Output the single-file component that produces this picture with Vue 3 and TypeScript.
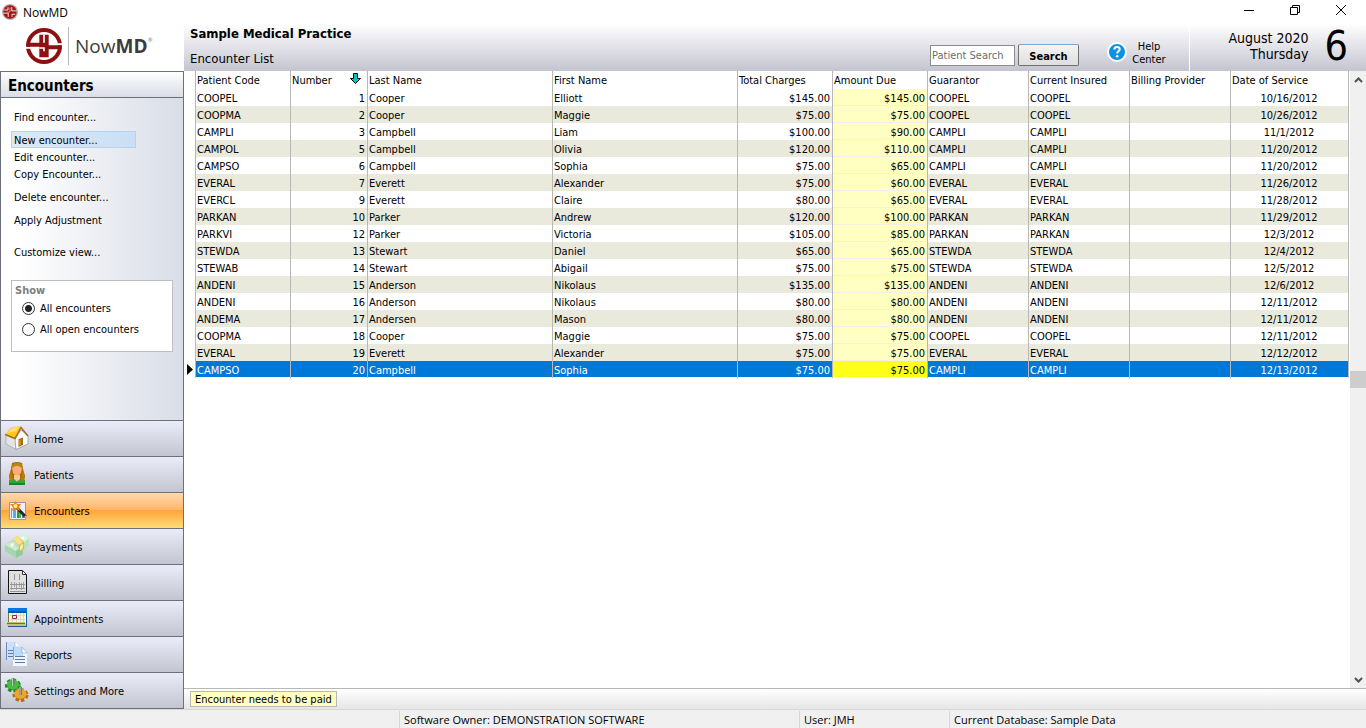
<script setup lang="ts">
import { ref } from 'vue'

interface Encounter {
  code: string
  num: number
  last: string
  first: string
  total: string
  due: string
  guarantor: string
  insured: string
  date: string
}

function enc(code: string, num: number, last: string, first: string, total: string, due: string, guarantor: string, insured: string, date: string): Encounter {
  return { code, num, last, first, total, due, guarantor, insured, date }
}

const rows: Encounter[] = [
  enc('COOPEL', 1, 'Cooper', 'Elliott', '$145.00', '$145.00', 'COOPEL', 'COOPEL', '10/16/2012'),
  enc('COOPMA', 2, 'Cooper', 'Maggie', '$75.00', '$75.00', 'COOPEL', 'COOPEL', '10/26/2012'),
  enc('CAMPLI', 3, 'Campbell', 'Liam', '$100.00', '$90.00', 'CAMPLI', 'CAMPLI', '11/1/2012'),
  enc('CAMPOL', 5, 'Campbell', 'Olivia', '$120.00', '$110.00', 'CAMPLI', 'CAMPLI', '11/20/2012'),
  enc('CAMPSO', 6, 'Campbell', 'Sophia', '$75.00', '$65.00', 'CAMPLI', 'CAMPLI', '11/20/2012'),
  enc('EVERAL', 7, 'Everett', 'Alexander', '$75.00', '$60.00', 'EVERAL', 'EVERAL', '11/26/2012'),
  enc('EVERCL', 9, 'Everett', 'Claire', '$80.00', '$65.00', 'EVERAL', 'EVERAL', '11/28/2012'),
  enc('PARKAN', 10, 'Parker', 'Andrew', '$120.00', '$100.00', 'PARKAN', 'PARKAN', '11/29/2012'),
  enc('PARKVI', 12, 'Parker', 'Victoria', '$105.00', '$85.00', 'PARKAN', 'PARKAN', '12/3/2012'),
  enc('STEWDA', 13, 'Stewart', 'Daniel', '$65.00', '$65.00', 'STEWDA', 'STEWDA', '12/4/2012'),
  enc('STEWAB', 14, 'Stewart', 'Abigail', '$75.00', '$75.00', 'STEWDA', 'STEWDA', '12/5/2012'),
  enc('ANDENI', 15, 'Anderson', 'Nikolaus', '$135.00', '$135.00', 'ANDENI', 'ANDENI', '12/6/2012'),
  enc('ANDENI', 16, 'Anderson', 'Nikolaus', '$80.00', '$80.00', 'ANDENI', 'ANDENI', '12/11/2012'),
  enc('ANDEMA', 17, 'Andersen', 'Mason', '$80.00', '$80.00', 'ANDENI', 'ANDENI', '12/11/2012'),
  enc('COOPMA', 18, 'Cooper', 'Maggie', '$75.00', '$75.00', 'COOPEL', 'COOPEL', '12/11/2012'),
  enc('EVERAL', 19, 'Everett', 'Alexander', '$75.00', '$75.00', 'EVERAL', 'EVERAL', '12/12/2012'),
  enc('CAMPSO', 20, 'Campbell', 'Sophia', '$75.00', '$75.00', 'CAMPLI', 'CAMPLI', '12/13/2012'),
]

const nav = ['Home', 'Patients', 'Encounters', 'Payments', 'Billing', 'Appointments', 'Reports', 'Settings and More']
const active = ref('Encounters')
const selected = ref(20)
const show = ref('all')
const search = ref('')
</script>

<template>
  <div class="window">
    <header class="titlebar">
      <svg class="title-icon" viewBox="0 0 36 36" aria-hidden="true">
        <circle cx="18" cy="18" r="18" fill="#b4b4b4" />
        <circle cx="18" cy="18" r="15" fill="#a01414" />
        <path d="M5 13.500H13.500V7M22 7V15.500H33M3 20.500H14V29M22.500 29V23H30" fill="none" stroke="#fff" stroke-width="2" />
        <path d="M18 8V18H12" fill="none" stroke="#e8c8c8" stroke-width="1.500" />
      </svg>
      <span class="title-text">NowMD</span>
      <div class="controls">
        <button type="button" aria-label="Minimize"><svg viewBox="0 0 12 12"><path d="M1 6.500H11" /></svg></button>
        <button type="button" aria-label="Restore"><svg viewBox="0 0 12 12"><path d="M1.500 3.500H8.500V10.500H1.500ZM3.500 3.500V1.500H10.500V8.500H8.500" /></svg></button>
        <button type="button" aria-label="Close"><svg viewBox="0 0 12 12"><path d="M1 1L11 11M11 1L1 11" /></svg></button>
      </div>
    </header>

    <div class="body">
      <aside class="sidebar">
        <div class="logo">
          <svg class="logo-mark" viewBox="0 0 108 108" aria-hidden="true">
            <circle cx="54" cy="54" r="48" fill="none" stroke="#8f1010" stroke-width="12" />
            <path d="M0 56H30V62H0ZM78 46H108V52H78Z" fill="#fff" />
            <path d="M2 44H40V20H68V52H106V64H68V88H40V56H2Z" fill="#8f1010" />
            <path d="M54 20V44M40 60H54V70" fill="none" stroke="#fff" stroke-width="5" />
          </svg>
          <span class="logo-text">Now<b>MD</b></span><span class="reg">®</span>
        </div>
        <h2 class="side-title">Encounters</h2>
        <div class="side-panel">
          <nav class="actions">
            <a href="#">Find encounter...</a>
            <a href="#" class="hot spaced">New encounter...</a>
            <a href="#">Edit encounter...</a>
            <a href="#">Copy Encounter...</a>
            <a href="#" class="spaced">Delete encounter...</a>
            <a href="#" class="spaced">Apply Adjustment</a>
            <a href="#" class="far">Customize view...</a>
          </nav>
          <fieldset class="show">
            <legend>Show</legend>
            <label><input v-model="show" type="radio" name="show" value="all" />All encounters</label>
            <label><input v-model="show" type="radio" name="show" value="open" />All open encounters</label>
          </fieldset>
        </div>
        <nav class="modules">
          <button v-for="item in nav" :key="item" type="button" :class="{ active: active === item }" @click="active = item">
            <svg viewBox="0 0 24 24" aria-hidden="true">
              <template v-if="item === 'Home'">
                <path d="M1 9V18L11 23.500V13Z" fill="#e4e4e6" stroke="#a2a2a2" stroke-width=".7" />
                <path d="M10 13L16 4L23 10V18L11 23.500Z" fill="#fff" stroke="#8d8d8d" stroke-width=".7" />
                <path d="M3 3H6V7H3Z" fill="#f0d98a" />
                <path d="M0 8.500L7 1L16 .500L10 12Z" fill="#ffc81f" />
                <path d="M2 7L8 1.500L14 1.500L11 5Z" fill="#ffe36c" />
                <path d="M0 8.500L10 12.500L16 1.500L23 10" fill="none" stroke="#9b7018" stroke-width="1.500" />
                <path d="M13.500 13L18 11.500V19L13.500 21Z" fill="#a86d13" />
                <path d="M14 14L16 13V19L14 20Z" fill="#c48a2a" />
                <path d="M17 4H19V5H17Z" fill="#e340b4" />
              </template>
              <template v-else-if="item === 'Patients'">
                <path d="M7 1Q12 -1 17 1L18 7L20 14L19 19H5L4 14L6 7Z" fill="#a96c09" />
                <path d="M4 18L8 16L12 19L16 16L20 18V22H4Z" fill="#2aa83b" />
                <path d="M4 21H20V23H4Z" fill="#16852b" />
                <path d="M9 13H15V17L12 19.500L9 17Z" fill="#ffc692" />
                <path d="M7 6Q12 1 17 6L16 11Q12 16 8 11Z" fill="#f9ae76" />
                <path d="M6 6Q7 1 12 1Q17 1 18 6L14 4H10Z" fill="#ba860c" />
                <path d="M6 8L8 17L6 20L4 15ZM18 8L16 17L18 20L20 15Z" fill="#b9790d" />
              </template>
              <template v-else-if="item === 'Encounters'">
                <path d="M4.500 4.500H20.500V21.500H4.500Z" fill="#edf1f8" stroke="#9298a3" />
                <path d="M6 10H7V20H6Z" fill="#8d93a0" />
                <path d="M8 11H11V20H8Z" fill="#55aef0" />
                <path d="M12 13H14V20H12Z" fill="#23a238" />
                <path d="M14 14H16V20H14Z" fill="#3bbd4d" />
                <path d="M17 17H19V20H17Z" fill="#9255bb" />
                <path d="M12 10L21 19" stroke="#262626" stroke-width="3" />
                <path d="M20 18L22 20" stroke="#bcbcbc" stroke-width="2" />
                <path d="M10.500 3L12 6L16 6L14 9L15 13L11 11L7 13L8 9L5 6L9 6Z" fill="#f57c18" />
                <circle cx="10.500" cy="8" r="2" fill="#fff478" />
              </template>
              <template v-else-if="item === 'Payments'">
                <path d="M0 11L8 6L18 13V20L11 24L0 17Z" fill="#a6d6ac" />
                <path d="M0 11L8 7L16 12L11 17Z" fill="#cdeccd" />
                <path d="M11 17L18 12V20L11 24Z" fill="#94c99c" />
                <path d="M10 4L18 0L24 4V12L18 17L10 12Z" fill="#b8e2bb" />
                <path d="M10 4L18 0L24 4L18 9Z" fill="#dbf2da" />
                <path d="M8 5L12 2L19 8V15L14 19V11Z" fill="#e6b143" />
                <path d="M8 5L12 2L18 8L14 11Z" fill="#ffe084" />
                <path d="M15 12L18 9V14L15 17Z" fill="#fff0a0" />
                <circle cx="7" cy="11" r="1.500" fill="#f5fff4" />
                <circle cx="18" cy="4" r="1.500" fill="#f5fff4" />
              </template>
              <template v-else-if="item === 'Billing'">
                <path d="M3.500 .500H17.500L21.500 4.500V23.500H3.500Z" fill="#e0e0e0" stroke="#151515" />
                <path d="M17.500 1V4.500H21" fill="#fff" stroke="#333" />
                <path d="M9.500 4V10M14.500 4V10" stroke="#959595" />
                <path d="M6.500 12V20M9.500 12V17M11.500 13V20M14.500 12V17M16.500 13V20M18.500 12V19" stroke="#a4a4a4" />
                <path d="M5 14.500H20M5 18.500H20M5 21.500H20" stroke="#959595" />
              </template>
              <template v-else-if="item === 'Appointments'">
                <path d="M3 3H22V20H3Z" fill="#f8f8df" />
                <path d="M3 2H22V5H3Z" fill="#0b77d5" />
                <path d="M3 5H22V7H3Z" fill="#0759aa" />
                <path d="M21.500 5V21" stroke="#0c65ba" />
                <path d="M5 9.500H20M5 13.500H20M7.500 7V16M11.500 7V16M15.500 7V16M18.500 7V16" stroke="#d9d9b4" />
                <path d="M7.500 9.500H11.500V12.500H7.500Z" fill="#fff" stroke="#a31c60" />
                <path d="M3.500 7V17" stroke="#777732" />
                <path d="M2 16H20L21 20H2Z" fill="#c6c36a" />
                <path d="M2 17.500H20" stroke="#74732a" />
                <path d="M3 20.500H22" stroke="#28568b" />
              </template>
              <template v-else-if="item === 'Reports'">
                <path d="M1 0H10L15 5V18H1Z" fill="#c9e3fc" />
                <path d="M10 0V5H15" fill="#fff" stroke="#9bbbdd" stroke-width=".7" />
                <path d="M1.500 0V18" stroke="#7689b8" />
                <path d="M3 8.500H8M3 11.500H8M3 14.500H8" stroke="#6578aa" />
                <path d="M8 5H17L22 11V24H8Z" fill="#f0f7ff" />
                <path d="M8 5H17L18 11V14H8Z" fill="#b9dcff" />
                <path d="M17 5V11H22Z" fill="#fff" stroke="#8baad1" stroke-width=".7" />
                <path d="M8.500 5V18" stroke="#8ba6cf" />
                <path d="M10 14.500H20M10 17.500H20M10 20.500H20" stroke="#6578aa" />
              </template>
              <template v-else>
                <ellipse cx="8" cy="7.500" rx="6" ry="5" fill="#35aa31" stroke="#247f26" stroke-width="4" stroke-dasharray="3 2" />
                <ellipse cx="8" cy="6.500" rx="6" ry="5" fill="#45c03a" />
                <ellipse cx="15.500" cy="17" rx="6" ry="5" fill="#d98a16" stroke="#b46c0d" stroke-width="4" stroke-dasharray="3 2" />
                <ellipse cx="15.500" cy="16" rx="6" ry="5" fill="#eba62e" />
                <path d="M8 0V8M15.500 9V17" stroke="#737a80" stroke-width="3" />
                <path d="M7.500 0V8M15 9V17" stroke="#bfc4c8" />
              </template>
            </svg>
            <span>{{ item }}</span>
          </button>
        </nav>
      </aside>

      <main class="main">
        <header class="banner">
          <div class="headings">
            <h1>Sample Medical Practice</h1>
            <p>Encounter List</p>
          </div>
          <form class="search" @submit.prevent>
            <input v-model="search" type="text" placeholder="Patient Search" aria-label="Patient Search" />
            <button type="submit">Search</button>
          </form>
          <a href="#" class="help">
            <svg viewBox="0 0 20 20" aria-hidden="true">
              <circle cx="10" cy="10" r="9" fill="#0b92e2" stroke="#fff" stroke-width="2" />
              <path d="M7.300 7.500Q7.500 5 10 5Q12.700 5 12.700 7.300Q12.700 8.700 11 9.600Q10.200 10.200 10.200 11.500" fill="none" stroke="#fff" stroke-width="2" />
              <circle cx="10.200" cy="14.200" r="1.300" fill="#fff" />
            </svg>
            <span>Help<br />Center</span>
          </a>
          <div class="date">
            <span>August 2020<br />Thursday</span>
            <strong>6</strong>
          </div>
        </header>

        <div class="content">
          <div class="grid">
            <table>
              <colgroup>
                <col class="c-mark" /><col class="c-money" /><col class="c-num" /><col /><col />
                <col class="c-money" /><col class="c-money" /><col class="c-code" /><col class="c-code" /><col class="c-code" /><col class="c-date" />
              </colgroup>
              <thead>
                <tr>
                  <th aria-label="Current row"></th>
                  <th>Patient Code</th>
                  <th>
                    <div class="sorted">Number
                      <svg viewBox="0 0 11 11" aria-hidden="true"><path d="M3.500 0.500H7.500V5.500H10.500L5.500 10.500L0.500 5.500H3.500Z" fill="#00c4c4" stroke="#000" /></svg>
                    </div>
                  </th>
                  <th>Last Name</th>
                  <th>First Name</th>
                  <th>Total Charges</th>
                  <th>Amount Due</th>
                  <th>Guarantor</th>
                  <th>Current Insured</th>
                  <th>Billing Provider</th>
                  <th>Date of Service</th>
                </tr>
              </thead>
              <tbody>
                <tr v-for="r in rows" :key="r.num" :class="{ selected: selected === r.num }" @click="selected = r.num">
                  <td class="mark"><svg v-if="selected === r.num" viewBox="0 0 6 11" aria-hidden="true"><path d="M0 0L6 5.500L0 11Z" /></svg></td>
                  <td>{{ r.code }}</td>
                  <td class="right">{{ r.num }}</td>
                  <td>{{ r.last }}</td>
                  <td>{{ r.first }}</td>
                  <td class="right">{{ r.total }}</td>
                  <td class="right due">{{ r.due }}</td>
                  <td>{{ r.guarantor }}</td>
                  <td>{{ r.insured }}</td>
                  <td></td>
                  <td class="center">{{ r.date }}</td>
                </tr>
              </tbody>
            </table>
          </div>
          <div class="scroll">
            <button type="button" aria-label="Scroll up"><svg viewBox="0 0 9 6"><path d="M1 5L4.500 1.500L8 5" /></svg></button>
            <div class="track"><div class="thumb"></div></div>
            <button type="button" aria-label="Scroll down"><svg viewBox="0 0 9 6"><path d="M1 1L4.500 4.500L8 1" /></svg></button>
          </div>
        </div>

        <footer class="legend"><span>Encounter needs to be paid</span></footer>
      </main>
    </div>

    <footer class="status">
      <span class="owner">Software Owner: DEMONSTRATION SOFTWARE</span>
      <span class="user">User: JMH</span>
      <span class="database">Current Database: Sample Data</span>
    </footer>
  </div>
</template>

<style>
body {
  margin: 0;
  background: #fff;
}
</style>

<style scoped>
.window {
  display: flex;
  flex-direction: column;
  height: 100vh;
  overflow: hidden;
  background: #fff;
  color: #000;
  font-family: Tahoma, "DejaVu Sans Condensed", "DejaVu Sans", sans-serif;
  font-size: 11px;
  line-height: 17px;
}
.window * {
  box-sizing: border-box;
}
button,
input {
  font: inherit;
  color: inherit;
}
a {
  color: inherit;
  text-decoration: none;
}
.titlebar {
  display: flex;
  align-items: center;
  flex: none;
  height: 24px;
  padding-left: 2px;
}
.title-icon {
  width: 16px;
  height: 16px;
}
.title-text {
  flex: 1;
  padding-left: 5px;
  font-family: "Segoe UI", "Open Sans", sans-serif;
  font-size: 12px;
}
.controls {
  display: flex;
  align-items: center;
  height: 20px;
  margin-bottom: 4px;
  padding-right: 2px;
}
.controls button {
  width: 46px;
  height: 20px;
  padding: 0;
  border: 0;
  background: none;
}
.controls svg {
  display: block;
  width: 12px;
  height: 12px;
  margin: 0 auto;
  fill: none;
  stroke: #000;
}
.body {
  display: flex;
  flex: 1;
  min-height: 0;
}
.sidebar {
  display: flex;
  flex-direction: column;
  flex: none;
  width: 184px;
}
.logo {
  display: flex;
  align-items: center;
  flex: none;
  height: 47px;
  padding: 0 0 3px 26px;
}
.logo-mark {
  width: 36px;
  height: 36px;
}
.logo-text {
  margin-left: 6px;
  padding-left: 6px;
  border-left: 1px solid #b8b8b8;
  color: #3c3c3c;
  font-family: "Open Sans", sans-serif;
  font-size: 19px;
  line-height: 38px;
}
.reg {
  align-self: flex-start;
  color: #777;
  font-size: 6px;
  line-height: 32px;
}
.side-title {
  flex: none;
  height: 27px;
  margin: 0;
  padding-left: 7px;
  border: 1px solid #6e7078;
  background: linear-gradient(#fff, #dadde6);
  font-size: 15px;
  line-height: 28px;
}
.side-panel {
  flex: 1;
  min-height: 0;
  padding: 10px;
  border: 1px solid #6e7078;
  border-width: 0 1px;
  background: linear-gradient(to right, #fff 10%, #d9dde7);
}
.actions {
  display: flex;
  flex-direction: column;
  align-items: flex-start;
}
.actions a {
  width: 125px;
  padding: 2px 0 0 3px;
  line-height: 15px;
}
.actions .spaced {
  margin-top: 6px;
}
.actions .far {
  margin-top: 15px;
}
.actions .hot {
  background: linear-gradient(to right, #dce9f7, #c9dff5);
  box-shadow: inset 0 0 0 1px #b5d3f0;
}
.show {
  height: 72px;
  margin: 20px 0 0;
  padding: 0 3px;
  border: 1px solid #bfbfbf;
  background: #fff;
}
.show legend {
  float: left;
  width: 100%;
  padding: 2px 0 0;
  color: #808080;
  font-weight: bold;
  line-height: 15px;
}
.show label {
  display: flex;
  align-items: center;
  clear: both;
  height: 21px;
  padding-left: 7px;
}
.show input {
  appearance: none;
  width: 13px;
  height: 13px;
  margin: 0 5px 0 0;
  border: 1px solid #333;
  border-radius: 50%;
  background: #fff;
}
.show input:checked {
  background: radial-gradient(circle, #222 3px, #fff 4px);
}
.modules {
  flex: none;
  border: 1px solid #6e7078;
  border-width: 0 1px 1px;
}
.modules button {
  display: flex;
  align-items: center;
  gap: 5px;
  width: 100%;
  height: 36px;
  padding: 0 0 0 4px;
  border: 0;
  border-top: 1px solid #6e7078;
  background: linear-gradient(#eaedf9, #c3c5d0);
}
.modules .active {
  background: linear-gradient(#ffd9ae, #ffb566 50%, #ffa53a 50%, #ffdd77);
}
.modules svg {
  width: 24px;
  height: 24px;
  margin-bottom: 2px;
}
.modules span {
  padding-top: 2px;
}
.main {
  display: flex;
  flex-direction: column;
  flex: 1;
  min-width: 0;
}
.banner {
  display: flex;
  flex: none;
  height: 47px;
  padding-left: 6px;
  background: linear-gradient(#fff, #c4c4d0);
}
.headings {
  flex: 1;
}
.headings h1 {
  margin: 0;
  font-size: 13px;
  line-height: 19px;
}
.headings p {
  margin: 6px 0 0;
  font-size: 13px;
  line-height: 20px;
}
.search {
  display: flex;
  align-items: flex-start;
  gap: 3px;
  padding-top: 20px;
}
.search input {
  width: 85px;
  height: 21px;
  margin-top: 1px;
  padding: 0 1px;
  border: 1px solid #8c8c8c;
  background: #fff;
}
.search input::placeholder {
  color: #6d6d6d;
  opacity: 1;
}
.search button {
  width: 61px;
  height: 22px;
  padding: 2px 0 0;
  border: 1px solid #707070;
  border-top-color: #7ba7dc;
  border-radius: 2px;
  background: linear-gradient(#f4f4f4, #dedede);
  font-weight: bold;
}
.help {
  display: flex;
  align-items: center;
  gap: 3px;
  width: 111px;
  padding: 9px 0 0 28px;
  border-right: 1px solid #fff;
  line-height: 13px;
  text-align: center;
}
.help svg {
  width: 20px;
  height: 20px;
}
.help span {
  width: 38px;
  padding-top: 1px;
}
.date {
  display: flex;
  align-items: center;
  justify-content: flex-end;
  gap: 16px;
  width: 176px;
  padding: 0 18px 3px 0;
  font-size: 14px;
  line-height: 16px;
  text-align: right;
}
.date strong {
  font-size: 41px;
  font-weight: normal;
  line-height: 44px;
}
.content {
  display: flex;
  flex: 1;
  min-height: 0;
}
.grid {
  flex: 1;
  min-width: 0;
}
table {
  width: 100%;
  border-collapse: separate;
  border-spacing: 0;
  table-layout: fixed;
}
.c-mark {
  width: 12px;
}
.c-money {
  width: 95px;
}
.c-num {
  width: 77px;
}
.c-code {
  width: 101px;
}
.c-date {
  width: 118px;
}
th,
td {
  height: 17px;
  padding: 2px 2px 0 1px;
  border-right: 1px solid #b8b8b8;
  line-height: 15px;
  overflow: hidden;
  text-align: left;
  white-space: nowrap;
}
th {
  height: 18px;
  font-weight: normal;
  line-height: 16px;
}
.sorted {
  display: flex;
  align-items: flex-start;
  justify-content: space-between;
  padding-right: 4px;
}
.sorted svg {
  width: 11px;
  height: 11px;
}
td.right {
  text-align: right;
}
td.center {
  text-align: center;
}
tbody tr:nth-child(even) td:not(.mark) {
  background: #e9e9dc;
}
tbody td.due,
tbody tr:nth-child(even) td.due {
  background: #ffffc2;
  box-shadow: inset 0 -1px 0 #f2f2e4;
}
tbody tr.selected td:not(.mark) {
  background: #0078d7;
  box-shadow: inset 0 -1px 0 #fff;
  color: #fff;
}
tbody tr.selected td.due:not(.mark) {
  background: #ffff18;
  color: #000;
}
td.mark {
  padding-top: 0;
}
.mark svg {
  display: block;
  width: 6px;
  height: 11px;
  margin-left: 2px;
}
.scroll {
  display: flex;
  flex-direction: column;
  flex: none;
  width: 16px;
  margin-left: 1px;
  background: #f0f0f0;
}
.scroll button {
  width: 16px;
  height: 17px;
  padding: 0;
  border: 0;
  background: none;
}
.scroll button svg {
  display: block;
  width: 9px;
  height: 6px;
  margin: 0 auto;
  fill: none;
  stroke: #505050;
  stroke-width: 2;
}
.track {
  display: flex;
  flex-direction: column;
  flex: 1;
}
.track::before {
  flex: 283;
  content: "";
}
.track::after {
  flex: 284;
  content: "";
}
.thumb {
  height: 17px;
  background: #cdcdcd;
}
.legend {
  display: flex;
  align-items: center;
  flex: none;
  height: 21px;
  padding-left: 6px;
  border-top: 1px solid #b8b8b8;
  background: linear-gradient(#fff, #e6e6e6);
}
.legend span {
  height: 16px;
  padding: 0 4px;
  border: 1px solid #b8b8b8;
  background: #ffffc2;
  line-height: 15px;
}
.status {
  display: flex;
  flex: none;
  height: 19px;
  padding-top: 1px;
  border-top: 1px solid #d7d7d7;
  background: #f0f0f0;
  font-family: "Segoe UI", "Open Sans", sans-serif;
  font-size: 11px;
  line-height: 18px;
}
.status span {
  padding-left: 4px;
  border-left: 1px solid #d7d7d7;
}
.owner {
  width: 400px;
  margin-left: 399px;
}
.user {
  width: 150px;
}
.database {
  flex: 1;
}
</style>
